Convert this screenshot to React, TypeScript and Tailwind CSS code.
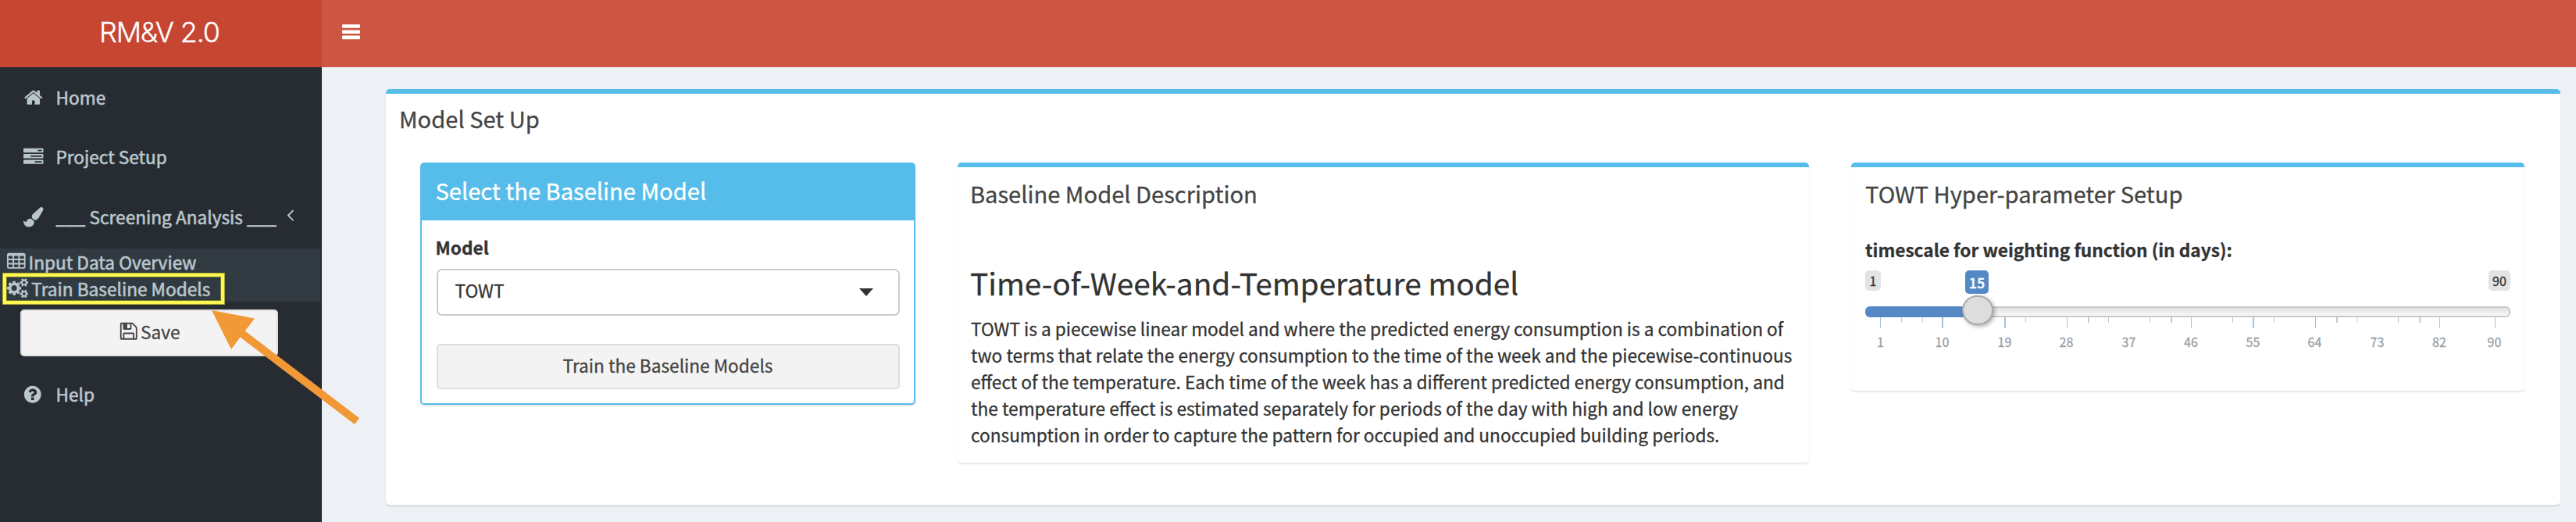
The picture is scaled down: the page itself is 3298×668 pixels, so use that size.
import type { ReactNode } from "react";

const PATHS = {
  home: "M1472 992v480q0 26-19 45t-45 19h-384v-384h-256v384h-384q-26 0-45-19t-19-45v-480q0-1 .5-3t.5-3l575-474 575 474q1 2 1 6zm223-69l-62 74q-8 9-21 11h-3q-13 0-21-7l-692-577-692 577q-12 8-24 7-13-2-21-11l-62-74q-8-10-7-23.5t11-21.5l719-599q32-26 76-26t76 26l244 204v-195q0-14 9-23t23-9h192q14 0 23 9t9 23v408l219 182q10 8 11 21.5t-7 23.5z",
  tasks: "M1024 1408h640v-128h-640v128zm-384-512h1024v-128h-1024v128zm640-512h384v-128h-384v128zm512 832v256q0 26-19 45t-45 19h-1664q-26 0-45-19t-19-45v-256q0-26 19-45t45-19h1664q26 0 45 19t19 45zm0-512v256q0 26-19 45t-45 19h-1664q-26 0-45-19t-19-45v-256q0-26 19-45t45-19h1664q26 0 45 19t19 45zm0-512v256q0 26-19 45t-45 19h-1664q-26 0-45-19t-19-45v-256q0-26 19-45t45-19h1664q26 0 45 19t19 45z",
  brush: "M1615 0q70 0 122.5 46.5t52.5 116.5q0 63-45 151-332 629-465 752-97 91-218 91-126 0-216.5-92.5t-90.5-219.5q0-128 92-212l638-579q59-54 130-54zm-909 1034q39 76 106.5 130t150.5 76l1 71q4 213-129.5 347t-348.5 134q-123 0-218-46.5t-152.5-127.5-86.5-183-29-220q7 5 41 30t62 44.5 59 36.5 46 17q41 0 55-37 25-66 57.5-112.5t69.5-76 88-47.5 103-25.5 125-10.5z",
  angle: "M1203 544q0 13-10 23l-393 393 393 393q10 10 10 23t-10 23l-50 50q-10 10-23 10t-23-10l-466-466q-10-10-10-23t10-23l466-466q10-10 23-10t23 10l50 50q10 10 10 23z",
  table: "M224 128h1344q66 0 113 47t47 113v1088q0 66-47 113t-113 47h-1344q-66 0-113-47t-47-113v-1088q0-66 47-113t113-47zM192 416v192q0 32 32 32h320q32 0 32-32v-192q0-32-32-32h-320q-32 0-32 32zM704 416v192q0 32 32 32h320q32 0 32-32v-192q0-32-32-32h-320q-32 0-32 32zM1216 416v192q0 32 32 32h320q32 0 32-32v-192q0-32-32-32h-320q-32 0-32 32zM192 800v192q0 32 32 32h320q32 0 32-32v-192q0-32-32-32h-320q-32 0-32 32zM704 800v192q0 32 32 32h320q32 0 32-32v-192q0-32-32-32h-320q-32 0-32 32zM1216 800v192q0 32 32 32h320q32 0 32-32v-192q0-32-32-32h-320q-32 0-32 32zM192 1184v192q0 32 32 32h320q32 0 32-32v-192q0-32-32-32h-320q-32 0-32 32zM704 1184v192q0 32 32 32h320q32 0 32-32v-192q0-32-32-32h-320q-32 0-32 32zM1216 1184v192q0 32 32 32h320q32 0 32-32v-192q0-32-32-32h-320q-32 0-32 32z",
  cogs: "M896 896q0-106-75-181t-181-75-181 75-75 181 75 181 181 75 181-75 75-181zm768 512q0-52-38-90t-90-38-90 38-38 90q0 53 37.5 90.5t90.5 37.5 90.5-37.5 37.5-90.5zm0-1024q0-52-38-90t-90-38-90 38-38 90q0 53 37.5 90.5t90.5 37.5 90.5-37.5 37.5-90.5zm-384 421v185q0 10-7 19.5t-16 10.5l-155 24q-11 35-32 76 34 48 90 115 7 11 7 20 0 12-7 19-23 30-82.5 89.5t-78.5 59.5q-11 0-21-7l-115-90q-37 19-77 31-11 108-23 155-7 24-30 24h-186q-11 0-20-7.5t-10-17.5l-23-153q-34-10-75-31l-118 89q-7 7-20 7-11 0-21-8-144-133-144-160 0-9 7-19 10-14 41-53t47-61q-23-44-35-82l-152-24q-10-1-17-9.5t-7-19.5v-185q0-10 7-19.5t16-10.5l155-24q11-35 32-76-34-48-90-115-7-11-7-20 0-12 7-20 22-30 82-89t79-59q11 0 21 7l115 90q34-18 77-32 11-108 23-154 7-24 30-24h186q11 0 20 7.5t10 17.5l23 153q34 10 75 31l118-89q8-7 20-7 11 0 21 8 144 133 144 160 0 8-7 19-12 16-42 54t-45 60q23 48 34 82l152 23q10 2 17 10.5t7 19.5zm640 533v140q0 16-149 31-12 27-30 52 51 113 51 138 0 4-4 7-122 71-124 71-8 0-46-47t-52-68q-20 2-30 2t-30-2q-14 21-52 68t-46 47q-2 0-124-71-4-3-4-7 0-25 51-138-18-25-30-52-149-15-149-31v-140q0-16 149-31 13-29 30-52-51-113-51-138 0-4 4-7 4-2 35-20t59-34 30-16q8 0 46 46.5t52 67.5q20-2 30-2t30 2q51-71 92-112l6-2q4 0 124 70 4 3 4 7 0 25-51 138 17 23 30 52 149 15 149 31zm0-1024v140q0 16-149 31-12 27-30 52 51 113 51 138 0 4-4 7-122 71-124 71-8 0-46-47t-52-68q-20 2-30 2t-30-2q-14 21-52 68t-46 47q-2 0-124-71-4-3-4-7 0-25 51-138-18-25-30-52-149-15-149-31v-140q0-16 149-31 13-29 30-52-51-113-51-138 0-4 4-7 4-2 35-20t59-34 30-16q8 0 46 46.5t52 67.5q20-2 30-2t30 2q51-71 92-112l6-2q4 0 124 70 4 3 4 7 0 25-51 138 17 23 30 52 149 15 149 31z",
  save: "M512 1536h768v-384h-768v384zm896 0h128v-896q0-14-10-38.5t-20-34.5l-281-281q-10-10-34-20t-39-10v416q0 40-28 68t-68 28h-576q-40 0-68-28t-28-68v-416h-128v1280h128v-416q0-40 28-68t68-28h832q40 0 68 28t28 68v416zm-384-928v-320q0-13-9.5-22.5t-22.5-9.5h-192q-13 0-22.5 9.5t-9.5 22.5v320q0 13 9.5 22.5t22.5 9.5h192q13 0 22.5-9.5t9.5-22.5zm640 32v928q0 40-28 68t-68 28h-1344q-40 0-68-28t-28-68v-1344q0-40 28-68t68-28h928q40 0 88 20t76 48l280 280q28 28 48 76t20 88z",
  help: "M1024 1376v-192q0-14-9-23t-23-9h-192q-14 0-23 9t-9 23v192q0 14 9 23t23 9h192q14 0 23-9t9-23zm256-672q0-88-55.5-163t-138.5-116-170-41q-243 0-371 213-15 24 8 42l132 100q7 6 19 6 16 0 25-12 53-68 86-92 34-24 86-24 48 0 85.5 26t37.5 59q0 38-20 61t-68 45q-63 28-115.5 86.5t-52.5 125.5v36q0 14 9 23t23 9h192q14 0 23-9t9-23q0-19 21.5-49.5t54.5-49.5q32-18 49-28.5t46-35 44.5-48 28-60.5 12.5-81zm384 192q0 209-103 385.5t-279.5 279.5-385.5 103-385.5-103-279.5-279.5-103-385.5 103-385.5 279.5-279.5 385.5-103 385.5 103 279.5 279.5 103 385.5z",
};

function Icon({ name, className = "", wide = false }: { name: keyof typeof PATHS; className?: string; wide?: boolean }) {
  return (
    <svg
      viewBox={wide ? "0 0 1920 1792" : "0 0 1792 1792"}
      className={`${wide ? "w-[27.3px]" : "w-[25.5px]"} h-[25.5px] shrink-0 fill-current ${className}`}
      fillRule="evenodd"
    >
      <path d={PATHS[name]} />
    </svg>
  );
}

function NavItem({ icon, label, iconClass = "" }: { icon: keyof typeof PATHS; label: string; iconClass?: string }) {
  return (
    <a className="flex h-[76px] items-center pl-[30px]">
      <Icon name={icon} className={iconClass} />
      <span className="mt-px ml-[16px]">{label}</span>
    </a>
  );
}

function Card({ title, className, children }: { title: string; className: string; children: ReactNode }) {
  return (
    <section className={`rounded-[5px] border-t-[6px] border-[#56bdea] bg-white shadow-[0_2px_2px_rgba(0,0,0,0.1)] ${className}`}>
      <h3 className="text-[29.1px] leading-[40px] text-[#444]">{title}</h3>
      {children}
    </section>
  );
}

const BIG_TICKS = [19, 98, 178, 258, 417, 496, 576, 735, 806];
const SMALL_TICKS = [46, 73, 205, 285, 311, 364, 391, 470, 523, 603, 629, 682, 709];
const WIDE_TICKS = [98, 178, 285, 391, 496, 603, 709];
const LABELS: [number, string][] = [
  [19.5, "1"], [98.5, "10"], [178.5, "19"], [257.5, "28"], [337.5, "37"], [417, "46"],
  [496.5, "55"], [575.5, "64"], [655.5, "73"], [735, "82"], [805.5, "90"],
];

function Slider() {
  return (
    <div className="relative h-[110px] w-[826px] text-[16px]">
      <div className="flex items-start justify-between leading-[26px] text-[#333]">
        <span className="h-[26px] w-5 rounded-[5px] bg-[#e3e3e3] text-center">1</span>
        <span className="h-[26px] w-7 rounded-[5px] bg-[#e3e3e3] text-center">90</span>
      </div>
      <div className="mt-5 flex h-[14px]">
        <div className="w-[140px] rounded-l-[6px] bg-[#5489c6]" />
        <div className="flex-1 rounded-r-[6px] border-2 border-l-0 border-[#c9c9c9] bg-linear-to-b from-[#dfdfdf] to-[#fafafa]" />
      </div>
      <svg className="h-[14px] w-full" shapeRendering="crispEdges">
        {BIG_TICKS.map((x) => (
          <rect key={x} x={x} y="0" width={WIDE_TICKS.includes(x) ? 2 : 1} height="14" fill="#a5c3e1" />
        ))}
        {SMALL_TICKS.map((x) => (
          <rect key={x} x={x} y="0" width={WIDE_TICKS.includes(x) ? 2 : 1} height="7" fill="#c8c8c8" />
        ))}
      </svg>
      {LABELS.map(([x, t]) => (
        <span key={t} className="absolute top-[81px] -translate-x-1/2 leading-[20px] text-[#99a0a6]" style={{ left: x }}>
          {t}
        </span>
      ))}
      <span className="absolute top-0 left-[128px] h-[30px] w-[30px] rounded-[5px] bg-[#5489c6] text-center text-[18px] leading-[30px] font-medium text-white">
        15
      </span>
      <span className="absolute top-[32px] left-[124px] h-[38px] w-[40px] rounded-[19px] border-2 border-[#aaa] bg-[#ddd] shadow-[2px_2px_5px_rgba(0,0,0,0.3)]" />
    </div>
  );
}

export default function App() {
  return (
    <div className="relative flex h-[668px] w-[3298px] flex-col overflow-hidden bg-[#edf0f5] font-['Noto_Sans_CJK_SC','Noto_Sans',sans-serif] text-[22.65px] leading-[34px] whitespace-nowrap text-[#333] [-webkit-text-stroke:0.3px]">
      <header className="flex h-[86px] shrink-0 bg-[#cd5543] text-white">
        <div className="w-[412px] bg-[#c64632] pl-[127px] font-['Inter',sans-serif] text-[36px] leading-[82px] font-light tracking-[-1.2px]">
          RM&amp;V 2.0
        </div>
        <svg className="mt-[31px] ml-[26px] h-[20px] w-[23px] fill-white">
          <rect x="0" y="0.2" width="23" height="4.6" rx="1" />
          <rect x="0" y="7.4" width="23" height="4.6" rx="1" />
          <rect x="0" y="14.6" width="23" height="4.6" rx="1" />
        </svg>
      </header>

      <div className="flex flex-1">
        <nav className="w-[412px] shrink-0 bg-[#262c32] text-[#bac6cd] [-webkit-text-stroke:0.6px]">
          <NavItem icon="home" label="Home" iconClass="mt-[2px]" />
          <NavItem icon="tasks" label="Project Setup" iconClass="mt-[1px]" />
          <a className="flex h-[80px] items-center pl-[30px]">
            <Icon name="brush" />
            <span className="ml-[16px]">___ Screening Analysis ___</span>
            <Icon name="angle" className="mb-[6px] ml-[5px]" />
          </a>
          <div className="w-[410px] bg-[#313a41]">
            <a className="flex h-[34px] items-center pl-[8px]">
              <Icon name="table" className="mb-[1px]" />
              <span className="mt-[2px] ml-[3px]">Input Data Overview</span>
            </a>
            <a className="flex h-[34px] items-center pl-[8.5px]">
              <Icon name="cogs" wide />
              <span className="mt-[2px] ml-[4.5px]">Train Baseline Models</span>
            </a>
          </div>
          <button className="mt-[10px] ml-[26px] flex h-[60px] w-[330px] items-center justify-center rounded-[5px] border-2 border-[#ddd] bg-[#f3f3f3] pb-[4px] text-[#444] [-webkit-text-stroke:0.3px]">
            <Icon name="save" />
            <span className="mt-[2px] ml-[3px]">Save</span>
          </button>
          <div className="mt-[10px]">
            <NavItem icon="help" label="Help" iconClass="mt-[2px] -ml-[1.5px] mr-[1.5px]" />
          </div>
        </nav>

        <main className="pt-[28px] pl-[82px]">
          <Card title="Model Set Up" className="h-[532px] w-[2784px] pt-[11px] pl-[17px]">
            <div className="mt-[37px] ml-[27px] flex items-start gap-[54px]">
              <section className="h-[310px] w-[634px] rounded-[5px] border-2 border-[#56bdea] bg-white shadow-[0_2px_2px_rgba(0,0,0,0.1)]">
                <h3 className="h-[72px] bg-[#56bdea] pl-[17.5px] text-[29.1px] leading-[67px] text-white">Select the Baseline Model</h3>
                <div className="px-[18.5px] pt-[18px]">
                  <div className="-ml-px font-bold">Model</div>
                  <div className="mt-[10px] flex h-[60px] items-center justify-between rounded-[7px] border-2 border-[#ccc] pr-[32px] pl-[22px]">
                    <span className="pb-[5px]">TOWT</span>
                    <svg className="h-[10px] w-[18px] fill-[#333]">
                      <path d="M0 0H18L9 10Z" />
                    </svg>
                  </div>
                  <button className="mt-9 flex h-[58px] w-full items-center justify-center rounded-[5px] border-2 border-[#ddd] bg-[#f3f3f3] pb-[2px] text-[#444]">
                    Train the Baseline Models
                  </button>
                </div>
              </section>

              <Card title="Baseline Model Description" className="h-[384px] w-[1090px] pt-[13px] pl-[16px]">
                <h2 className="mt-[70px] text-[38.8px] leading-[48px]">Time-of-Week-and-Temperature model</h2>
                <p className="mt-[19px] ml-px">
                  TOWT is a piecewise linear model and where the predicted energy consumption is a combination of
                  <br />
                  two terms that relate the energy consumption to the time of the week and the piecewise-continuous
                  <br />
                  effect of the temperature. Each time of the week has a different predicted energy consumption, and
                  <br />
                  the temperature effect is estimated separately for periods of the day with high and low energy
                  <br />
                  consumption in order to capture the pattern for occupied and unoccupied building periods.
                </p>
              </Card>

              <Card title="TOWT Hyper-parameter Setup" className="h-[292px] w-[862px] pt-[13px] pl-[18px]">
                <div className="mt-[36px] mb-[9px] font-bold">timescale for weighting function (in days):</div>
                <Slider />
              </Card>
            </div>
          </Card>
        </main>
      </div>

      <div className="absolute top-[349px] left-[3px] h-[41px] w-[285px] border-[5px] border-[#fff850] shadow-[inset_0_0_0_1px_#77772c] outline-1 -outline-offset-1 outline-[#a5a23a]" />
      <svg className="absolute top-[390px] left-[265px] h-[160px] w-[200px] fill-[#f19837]">
        <path d="M6 7L61 17.5L48.7 33.5L195 145L189 153L42.5 41.5L31 57Z" />
      </svg>
    </div>
  );
}
